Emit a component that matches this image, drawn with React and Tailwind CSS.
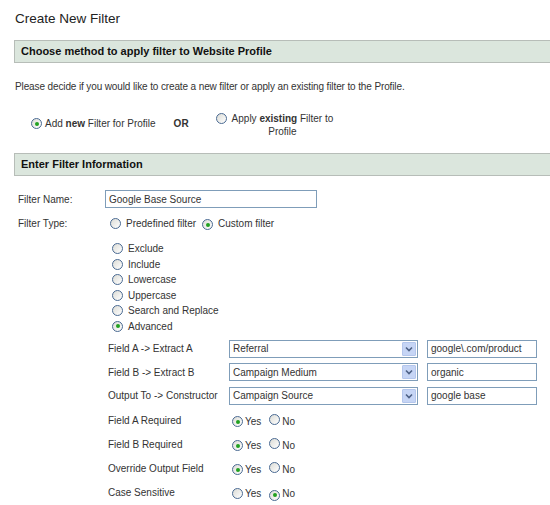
import React from 'react';

const Radio = ({ checked }) => (
  <span className="relative inline-flex w-[11px] h-[11px] shrink-0 items-center justify-center rounded-full border border-[#4a6a92] bg-gradient-to-br from-[#dcdcd6] to-white">
    {checked && <span className="w-[4px] h-[4px] rounded-full bg-[#21a121]" />}
  </span>
);

const SectionBar = ({ children }) => (
  <div className="ml-[14px] h-[23px] flex items-center pl-[6px] border-y border-l border-[#b7bdb8] bg-[#dbe6dd] text-[11px] font-bold text-[#111]">
    {children}
  </div>
);

const SelectBox = ({ value }) => (
  <div className="w-[189px] h-[18px] flex items-center justify-between border border-[#7f9db9] bg-white pl-[3px] pr-[1px]">
    <span>{value}</span>
    <span className="w-[14px] h-[14px] flex items-center justify-center bg-[#c6d5f5] border border-[#b4c6ec] rounded-[1px]">
      <svg width="8" height="6" viewBox="0 0 8 6">
        <path d="M1 1.5 L4 4.5 L7 1.5" fill="none" stroke="#4d6185" strokeWidth="1.6" />
      </svg>
    </span>
  </div>
);

const TextBox = ({ value, w }) => (
  <div className={`${w} h-[18px] flex items-center border border-[#7f9db9] bg-white pl-[3px]`}>{value}</div>
);

const fieldRows = [
  { label: 'Field A -> Extract A', select: 'Referral', text: 'google\\.com/product' },
  { label: 'Field B -> Extract B', select: 'Campaign Medium', text: 'organic' },
  { label: 'Output To -> Constructor', select: 'Campaign Source', text: 'google base' },
];

const yesNoRows = [
  { label: 'Field A Required', yes: true },
  { label: 'Field B Required', yes: true },
  { label: 'Override Output Field', yes: true },
  { label: 'Case Sensitive', yes: false },
];

const filterOptions = ['Exclude', 'Include', 'Lowercase', 'Uppercase', 'Search and Replace', 'Advanced'];

export default function App() {
  return (
    <div className="w-[550px] h-[505px] overflow-hidden bg-white text-[10px] text-[#333] font-['Liberation_Sans',Arial,sans-serif]">
      <div className="h-[40px] pl-[15px] pt-[9px] text-[13.5px] text-[#222]">Create New Filter</div>

      <SectionBar>Choose method to apply filter to Website Profile</SectionBar>

      <p className="pl-[15px] mt-[17px] leading-[13px] tracking-[-0.12px]">
        Please decide if you would like to create a new filter or apply an existing filter to the Profile.
      </p>

      {/* method choice */}
      <div className="flex items-start pl-[31px] mt-[20px] h-[40px]">
        <div className="flex items-center gap-[3px] mt-[3px]">
          <Radio checked />
          <span>Add <b>new</b> Filter for Profile</span>
        </div>
        <span className="ml-[18px] mt-[3px] font-bold">OR</span>
        <div className="ml-[27px] flex items-start gap-[5px]">
          <Radio />
          <div className="text-center leading-[13px] -mt-[1px]">
            Apply <b>existing</b> Filter to<br />Profile
          </div>
        </div>
      </div>

      <SectionBar>Enter Filter Information</SectionBar>

      <div className="pl-[18px] mt-[11px]">
        <div className="flex items-center h-[24px]">
          <span className="w-[87px]">Filter Name:</span>
          <TextBox value="Google Base Source" w="w-[212px]" />
        </div>

        <div className="flex items-center h-[24px]">
          <span className="w-[87px]">Filter Type:</span>
          <div className="flex items-center ml-[5px] gap-[5px]">
            <Radio />
            <span>Predefined filter</span>
            <span className="ml-[1px]"><Radio checked /></span>
            <span>Custom filter</span>
          </div>
        </div>

        <div className="mt-[6px] pl-[94px]">
          {filterOptions.map((opt) => (
            <div key={opt} className="flex items-center gap-[5px] h-[15.5px]">
              <Radio checked={opt === 'Advanced'} />
              <span>{opt}</span>
            </div>
          ))}
        </div>

        <div className="mt-[3px] pl-[90px]">
          {fieldRows.map((r) => (
            <div key={r.label} className="flex items-center h-[23.5px]">
              <span className="w-[121px]">{r.label}</span>
              <SelectBox value={r.select} />
              <span className="ml-[9px]"><TextBox value={r.text} w="w-[110px]" /></span>
            </div>
          ))}
        </div>

        <div className="mt-[2px] pl-[90px]">
          {yesNoRows.map((r) => (
            <div key={r.label} className="flex items-center h-[24px]">
              <span className="w-[124px] -mt-[3px]">{r.label}</span>
              <div className="flex items-center gap-[2px]">
                <Radio checked={r.yes} />
                <span>Yes</span>
                <span className="ml-[6px]"><Radio checked={!r.yes} /></span>
                <span>No</span>
              </div>
            </div>
          ))}
        </div>
      </div>
    </div>
  );
}
